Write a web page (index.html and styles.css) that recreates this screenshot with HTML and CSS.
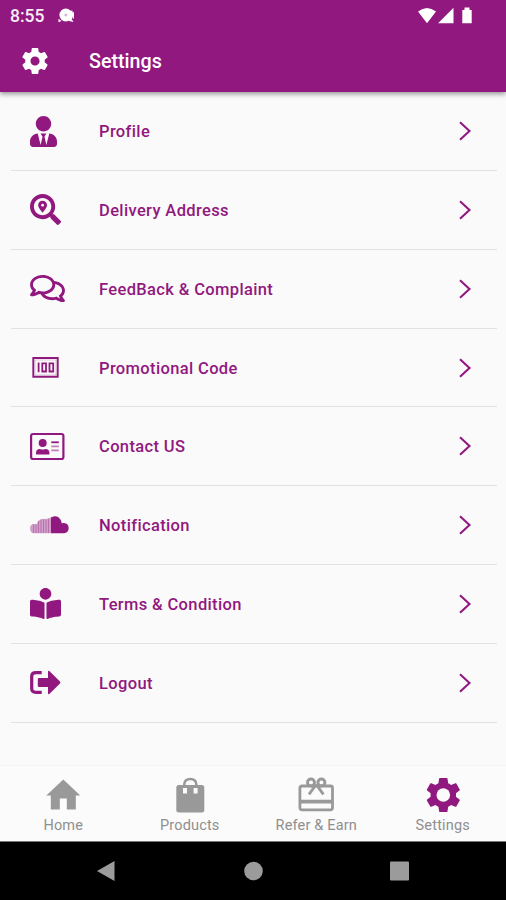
FILE: index.html
```html
<!DOCTYPE html>
<html lang="en">
<head>
<meta charset="utf-8">
<title>Settings</title>
<link rel="stylesheet" href="styles.css">
</head>
<body>
<svg class="defs" width="0" height="0">
  <symbol id="chevron" viewBox="0 0 14 22"><path d="M2 2.200 11.500 11 2 19.800" fill="none" stroke="currentColor" stroke-width="2.100"/></symbol>
  <symbol id="gear" viewBox="2 2 20 20"><path fill-rule="evenodd" d="M19.43 12.98c.04-.32.07-.64.07-.98s-.03-.66-.07-.98l2.11-1.65c.19-.15.24-.42.12-.64l-2-3.46c-.12-.22-.39-.3-.61-.22l-2.49 1c-.52-.4-1.08-.73-1.69-.98l-.38-2.65C14.46 2.18 14.25 2 14 2h-4c-.25 0-.46.18-.49.42l-.38 2.65c-.61.25-1.17.59-1.69.98l-2.49-1c-.23-.09-.49 0-.61.22l-2 3.46c-.13.22-.07.49.12.64l2.11 1.65c-.04.32-.07.65-.07.98s.03.66.07.98l-2.11 1.65c-.19.15-.24.42-.12.64l2 3.46c.12.22.39.3.61.22l2.49-1c.52.4 1.08.73 1.69.98l.38 2.65c.03.24.24.42.49.42h4c.25 0 .46-.18.49-.42l.38-2.65c.61-.25 1.17-.59 1.69-.98l2.49 1c.23.09.49 0 .61-.22l2-3.46c.12-.22.07-.49-.12-.64l-2.11-1.65zM12 15.5c-1.93 0-3.5-1.57-3.5-3.5s1.57-3.5 3.5-3.5 3.5 1.57 3.5 3.5-1.57 3.5-3.5 3.5z"/></symbol>
</svg>
<div class="screen">
  <header class="top">
    <div class="status">
      <span class="clock">8:55</span>
      <svg class="notif" viewBox="0 0 18 16"><circle cx="7.800" cy="7" r="6.400"/><path d="M.5 14.300v-3.600l3 2.300zM11 3l3.500-.5v2L16 4v6.500h-1.300V8.500l-1 2.500 1.800 3-4.500-1z"/><circle cx="7.800" cy="7" r="1.500" class="dim"/></svg>
      <svg class="signals" viewBox="0 0 57 18"><path d="M1 4.500Q10-2.500 19 4.500L10 16.300zM21 16.300 36.500 0.800V16.300zM45.300 3h2.200V.5h5V3h2.200v13.300h-9.400z"/></svg>
    </div>
    <div class="titlebar">
      <svg class="title-gear"><use href="#gear"/></svg>
      <h1>Settings</h1>
    </div>
  </header>
  <main class="list">
    <div class="row"><div class="icon"><svg width="27" height="31" viewBox="0 0 448 512"><path d="M224 256c70.700 0 128-57.300 128-128S294.700 0 224 0 96 57.300 96 128s57.300 128 128 128zm95.800 32.600L272 480l-32-136 32-56h-96l32 56-32 136-47.800-191.400C56.900 292 0 350.300 0 422.400V464c0 26.500 21.500 48 48 48h352c26.500 0 48-21.500 48-48v-41.600c0-72.100-56.900-130.400-128.200-133.800z"/></svg></div><span>Profile</span><svg class="chev"><use href="#chevron"/></svg></div>
    <div class="row"><div class="icon"><svg width="31" height="31" viewBox="0 0 512 512"><path d="M505.040 442.660l-99.710-99.690c-4.500-4.500-10.600-7-17-7h-16.300c27.600-35.300 44-79.690 44-127.990C416.030 93.090 322.920 0 208.020 0S0 93.090 0 207.980s93.110 207.980 208.020 207.980c48.300 0 92.710-16.400 128.010-44v16.300c0 6.400 2.500 12.500 7 17l99.710 99.690c9.400 9.400 24.600 9.400 33.900 0l28.300-28.300c9.400-9.400 9.400-24.590.1-33.990zm-297.020-90.700c-79.540 0-144-64.340-144-143.980 0-79.530 64.350-143.980 144-143.980 79.540 0 144 64.340 144 143.980 0 79.530-64.350 143.980-144 143.980zm.02-239.960c-40.780 0-73.840 33.050-73.840 73.830 0 32.960 48.260 93.050 66.750 114.860a9.240 9.240 0 0 0 14.180 0c18.490-21.810 66.750-81.890 66.750-114.860 0-40.780-33.060-73.830-73.840-73.830zm0 96c-13.260 0-24-10.750-24-24 0-13.260 10.750-24 24-24s24 10.740 24 24c0 13.250-10.750 24-24 24z"/></svg></div><span>Delivery Address</span><svg class="chev"><use href="#chevron"/></svg></div>
    <div class="row"><div class="icon"><svg width="35" height="31" viewBox="0 0 576 512"><path d="M532 386.200c27.500-27.100 44-61.100 44-98.200 0-80-76.500-146.100-176.200-157.900C368.300 72.500 294.300 32 208 32 93.100 32 0 103.600 0 192c0 37 16.500 71 44 98.200-15.300 30.700-37.300 54.500-37.700 54.900-6.300 6.700-8.100 16.500-4.400 25 3.600 8.500 12 14 21.200 14 53.500 0 96.700-20.200 125.200-38.800 9.200 2.100 18.700 3.700 28.400 4.900C208.100 407.600 281.800 448 368 448c20.800 0 40.800-2.400 59.800-6.800C456.300 459.700 499.400 480 553 480c9.200 0 17.500-5.500 21.200-14 3.600-8.500 1.900-18.300-4.400-25-.4-.3-22.500-24.100-37.800-54.800zm-392.800-92.300L122.100 305c-14.100 9.100-28.500 16.300-43.100 21.400 2.700-4.700 5.400-9.700 8-14.800l15.500-31.100L77.700 256C64.200 242.600 48 220.700 48 192c0-60.700 73.300-112 160-112s160 51.300 160 112-73.300 112-160 112c-16.500 0-33-1.900-49-5.600l-19.800-4.500zM498.300 352l-24.700 24.400 15.500 31.100c2.600 5.100 5.300 10.100 8 14.800-14.600-5.100-29-12.300-43.100-21.400l-17.100-11.100-19.900 4.600c-16 3.700-32.500 5.600-49 5.600-54 0-102.200-20.100-131.300-49.700C338 339.500 416 272.900 416 192c0-3.400-.4-6.700-.7-10C479.700 196.500 528 238.800 528 288c0 28.700-16.200 50.600-29.700 64z"/></svg></div><span>FeedBack &amp; Complaint</span><svg class="chev"><use href="#chevron"/></svg></div>
    <div class="row"><div class="icon"><svg width="31" height="31" viewBox="0 0 31 31"><g fill="none" stroke="currentColor"><path d="M3.300 6h24.400v18.800H3.300z" stroke-width="1.900"/><path d="M5.100 8h20.800v14.800H5.100z" stroke-width=".8" opacity=".25"/><path d="M8.600 10.500v9.800" stroke-width="1.800"/><path d="M12.300 11.300h3.700v8.200h-3.700zM19.500 11.300h3.700v8.200h-3.700z" stroke-width="1.800"/></g></svg></div><span>Promotional Code</span><svg class="chev"><use href="#chevron"/></svg></div>
    <div class="row"><div class="icon"><svg width="35" height="31" viewBox="0 0 35 31"><rect x="1.100" y="3" width="32.300" height="25" rx="2" fill="none" stroke="currentColor" stroke-width="2.200"/><circle cx="12.700" cy="12" r="4"/><path d="M6 23.500v-1.700q0-3.800 4-3.800 2.700 1 5.400 0 4 0 4 3.800v1.700z"/><path d="M21.300 11.300h7.500" stroke="currentColor" stroke-width="1.800"/><path d="M21.300 15.300h7.500M21.300 19.300h7.500" stroke="currentColor" stroke-width="1.800" opacity=".55"/></svg></div><span>Contact US</span><svg class="chev"><use href="#chevron"/></svg></div>
    <div class="row"><div class="icon"><svg width="39" height="18" viewBox="0 0 39 18"><path d="M21 1.500Q27-2 30.500 3.500 31.500 5 31.700 7.200 38.500 6.500 38.700 12 38.500 17 34 17.200H21z"/><path opacity=".4" d="M0 11.500q1-3.500 3-3.500l4 0 1-3q4-3 8-2l5-1.500v15.700H3Q0 16.500 0 11.500z"/><path fill="none" stroke="currentColor" stroke-width="1" opacity=".35" d="M3.500 8.500V17M6 8.500V17M8.500 5V17M11 3.500V17M13.500 3.500V17M16 4V17M18.500 3V17"/></svg></div><span>Notification</span><svg class="chev"><use href="#chevron"/></svg></div>
    <div class="row"><div class="icon"><svg width="31" height="31" viewBox="0 0 512 512"><path d="M352 96c0-53.020-42.980-96-96-96s-96 42.980-96 96 42.980 96 96 96 96-42.980 96-96zM233.590 241.100c-59.330-36.320-155.430-46.300-203.790-49.050C13.550 191.130 0 203.510 0 219.140v222.800c0 14.330 11.590 26.280 26.490 27.050 43.660 2.290 131.990 10.680 193.040 41.430 9.370 4.720 20.480-1.710 20.480-11.870V252.560c-.01-4.670-2.320-8.950-6.420-11.460zm248.610-49.050c-48.350 2.740-144.460 12.730-203.780 49.050-4.100 2.510-6.410 6.960-6.410 11.630v245.790c0 10.190 11.140 16.630 20.540 11.900 61.040-30.720 149.320-39.110 192.970-41.400 14.900-.78 26.490-12.730 26.490-27.060V219.140c-.01-15.630-13.560-28.010-29.810-27.090z"/></svg></div><span>Terms &amp; Condition</span><svg class="chev"><use href="#chevron"/></svg></div>
    <div class="row"><div class="icon"><svg width="31" height="25" viewBox="0 0 31 25"><path d="M11.700 2.700H6Q1.700 2.700 1.700 6.500v12Q1.700 22.300 6 22.300h5.700" fill="none" stroke="currentColor" stroke-width="3.200"/><path d="M9 8h9V1.800q.2-1.500 1.600-.6L30 11.500q.8 1 0 2L19.600 23.800q-1.400 1-1.600-.6V17H9Q7.800 17 7.800 15.800V9.200Q7.800 8 9 8z"/></svg></div><span>Logout</span><svg class="chev"><use href="#chevron"/></svg></div>
  </main>
  <nav class="tabs">
    <div class="tab"><svg viewBox="0 0 36 36"><path d="M14.800 32.500V21.500h7v11h9V18.500H35.300L18.300 2.500 1.300 18.500h4.500v14z"/></svg><span>Home</span></div>
    <div class="tab"><svg viewBox="0 0 36 36"><path d="M12.300 8.500V7Q12.800 1.900 18.300 1.900T24.300 7v1.500" fill="none" stroke="currentColor" stroke-width="2.500"/><path fill-rule="evenodd" d="M6.800 8h23q2.500 0 2.500 2.500V33q0 2.500-2.500 2.500h-23Q4.300 35.500 4.300 33V10.500Q4.300 8 6.800 8zm4.200 3v5.500h4V11zm10.600 0v5.500h4V11z"/></svg><span>Products</span></div>
    <div class="tab"><svg viewBox="0 0 36 36"><g fill="none" stroke="currentColor" stroke-width="2.800"><rect x="1.900" y="9" width="32.600" height="23.800" rx="2"/><path d="M1.900 24.700h32.600" stroke-width="3.700"/><circle cx="13" cy="5.500" r="3.500" stroke-width="2.900"/><circle cx="23.400" cy="5.500" r="3.500" stroke-width="2.900"/><path d="m18.200 7.500-7.200 9.800M18.200 7.500l7.200 9.800"/></g></svg><span>Refer &amp; Earn</span></div>
    <div class="tab active"><svg viewBox="0 0 36 36"><use href="#gear" x="1.300" y="1" width="34" height="34"/><circle cx="18.300" cy="18" r="6.800" class="hole"/></svg><span>Settings</span></div>
  </nav>
  <footer class="system">
    <svg viewBox="0 0 20 22"><path d="M1 11 18.500 1v20z"/></svg>
    <svg viewBox="0 0 20 22"><circle cx="10.500" cy="11" r="9.300"/></svg>
    <svg viewBox="0 0 20 22"><rect x="0" y="1.500" width="19" height="19" rx="1"/></svg>
  </footer>
</div>
</body>
</html>
```
FILE: styles.css
```css
* { box-sizing: border-box; }
body { margin: 0; font-family: Roboto, "Liberation Sans", sans-serif; background: #fafafa; color: #91187f; }
svg { display: block; fill: currentColor; flex: none; }
.defs { position: absolute; }
.screen { width: 506px; height: 900px; display: flex; flex-direction: column; overflow: hidden; }
.top { height: 92px; flex: none; background: #91187f; color: #fff; box-shadow: 0 2px 5px rgba(0,0,0,.42); z-index: 1; }
.status { height: 31px; display: flex; align-items: center; padding: 0 32px 0 10px; }
.clock { font-size: 17.5px; font-weight: 500; line-height: 32px; width: 48px; opacity: .93; }
.notif { width: 18px; height: 16px; }
.dim { fill: #d9b5d4; }
.signals { width: 57px; height: 18px; margin-left: auto; }
.titlebar { height: 60px; display: flex; align-items: center; padding-left: 22px; }
.title-gear { width: 26px; height: 26px; }
h1 { margin: 1px 0 0 41px; font-size: 19.7px; font-weight: 500; line-height: 25px; }
.list { flex: none; padding: .3px 9px 0 11px; }
.row { height: 78.8px; border-bottom: 1.500px solid #e2e2e2; display: flex; align-items: center; padding: 0 25px 0 19px; font-size: 16.5px; font-weight: 500; letter-spacing: .36px; }
.row span { padding-top: 1px; }
.icon { width: 69px; flex: none; }
.chev { width: 14px; height: 22px; margin-left: auto; }
.tabs { margin-top: auto; height: 76px; flex: none; display: grid; grid-template-columns: repeat(4, 1fr); border-top: 1px solid #f4f4f4; background: #fbfbfb; color: #999; }
.tab { display: flex; flex-direction: column; align-items: center; padding-top: 11px; }
.tab svg { width: 36px; height: 36px; }
.tab span { font-size: 14.5px; line-height: 18px; margin-top: 4px; color: #8f8f8f; letter-spacing: .17px; }
.tab.active svg { color: #91187f; }
.hole { fill: #fbfbfb; }
.system { height: 59px; flex: none; background: #000; color: #9b9b9b; display: flex; justify-content: space-between; align-items: center; padding: 0 96px 0 96px; border-top: 1px solid #777; }
.system svg { width: 20px; height: 22px; }
```
